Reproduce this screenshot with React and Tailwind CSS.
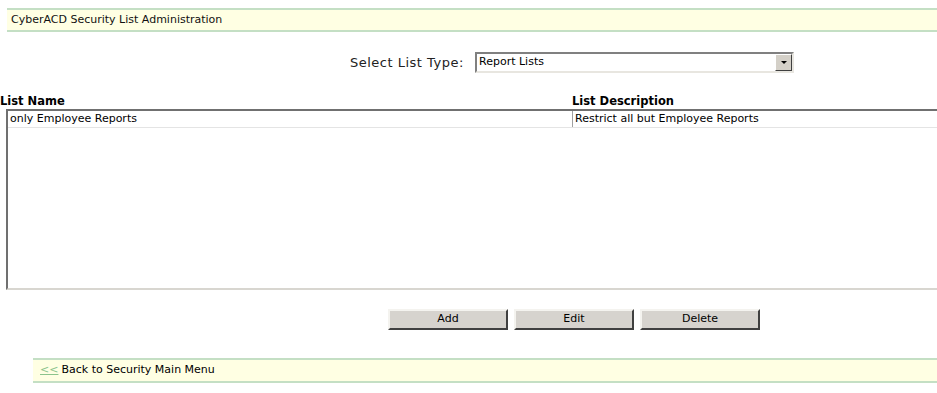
import React from "react";

export default function App() {
  const font = { fontFamily: '"DejaVu Sans", Verdana, sans-serif' };
  return (
    <div className="w-[937px] h-[393px] bg-white text-black overflow-hidden" style={font}>
      <div className="pt-[8px] pl-[7px]">
        <div className="h-[24px] bg-[#ffffe3] border-y-2 border-[#c4dfc4] flex items-center pl-[4px] text-[11px] text-[#111]">
          CyberACD Security List Administration
        </div>
      </div>

      <div className="flex items-center mt-[20px] h-[21px]">
        <div className="ml-[350px] text-[13px] tracking-[0.5px] text-[#222] w-[125px]">Select List Type:</div>
        <div className="w-[319px] h-[21px] border-2 border-t-[#808080] border-l-[#808080] border-b-[#e8e6e0] border-r-[#e8e6e0] bg-white flex items-center">
          <div className="flex-1 text-[11px] pl-[2px]">Report Lists</div>
          <div className="w-[17px] h-[17px] bg-[#d4d0c8] border border-t-white border-l-white border-b-[#404040] border-r-[#404040] flex items-center justify-center">
            <div className="w-0 h-0 border-l-[3px] border-r-[3px] border-t-[3px] border-l-transparent border-r-transparent border-t-black" />
          </div>
        </div>
      </div>

      <div className="mt-[22px] flex text-[11.5px] font-bold leading-[13px] h-[13px]">
        <div className="w-[572px]">List Name</div>
        <div>List Description</div>
      </div>

      <div className="mt-[1px] ml-[6px] h-[181px] border-l-2 border-t-2 border-b-2 border-l-[#707070] border-t-[#707070] border-b-[#d8d6d0] bg-white">
        <div className="flex text-[11px] h-[17px] items-center border-b border-[#e4e4e4]">
          <div className="w-[564px] pl-[2px]">only Employee Reports</div>
          <div className="h-full border-l border-[#a0a0a0] pl-[2px] flex items-center">Restrict all but Employee Reports</div>
        </div>
      </div>

      <div className="mt-[19px] flex pl-[388px] gap-[6px]">
        {["Add", "Edit", "Delete"].map((t) => (
          <div
            key={t}
            className="w-[120px] h-[21px] bg-[#d6d3ce] border-2 border-t-[#f4f3ef] border-l-[#f4f3ef] border-b-[#404040] border-r-[#404040] flex items-center justify-center text-[11px]"
          >
            {t}
          </div>
        ))}
      </div>

      <div className="mt-[28px] ml-[33px]">
        <div className="h-[25px] bg-[#ffffe3] border-y-2 border-[#c4dfc4] flex items-center pl-[7px] text-[11px]">
          <span className="text-[#8cc48c] underline mr-[3px]">&lt;&lt;</span>
          <span>Back to Security Main Menu</span>
        </div>
      </div>
    </div>
  );
}
